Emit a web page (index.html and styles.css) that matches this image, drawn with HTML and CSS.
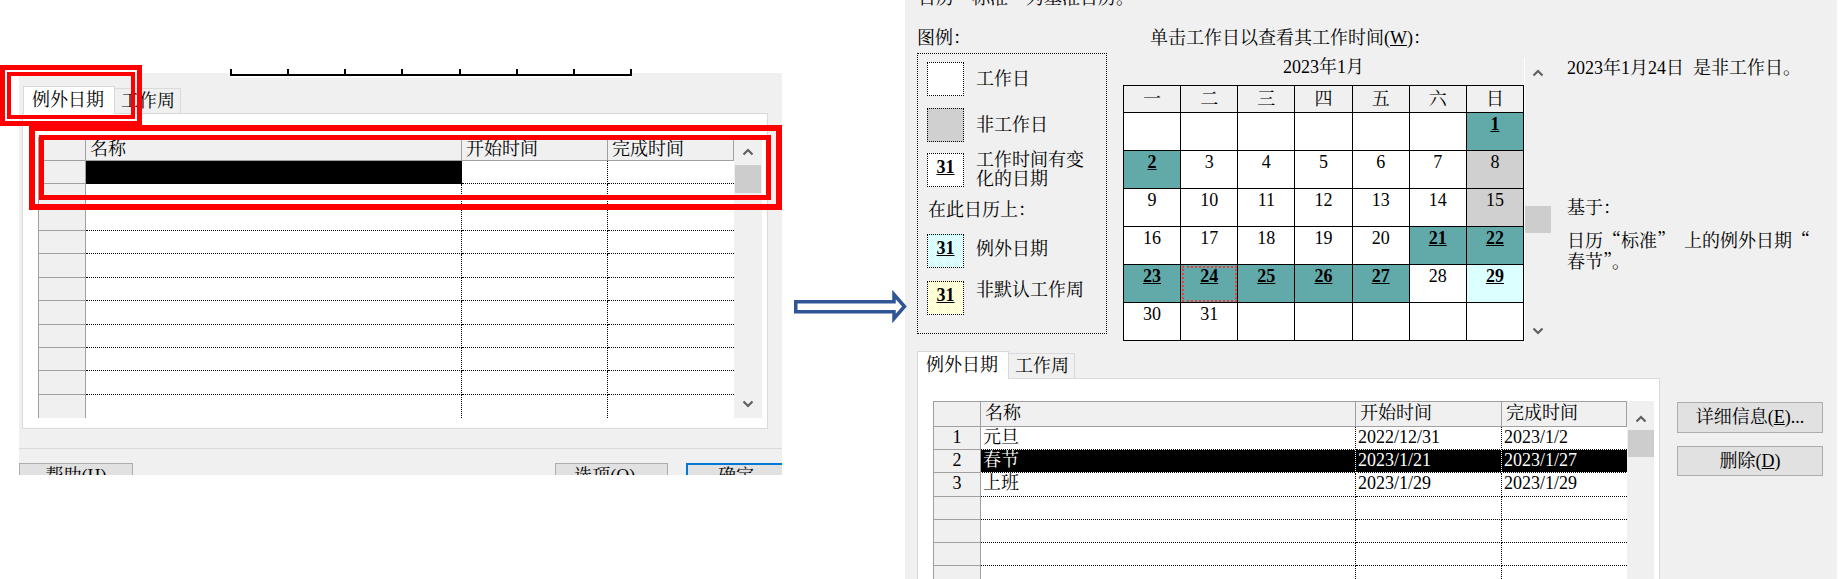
FILE: index.html
```html
<!DOCTYPE html>
<html lang="zh-CN">
<head>
<meta charset="utf-8">
<title>更改工作时间 - 例外日期</title>
<link rel="stylesheet" href="styles.css">
</head>
<body>
<div class="stage">
  <section class="shot-left">
    <div class="ruler"></div>
    <div class="dlg">
      <div class="tabs">
        <div class="tab active">例外日期</div>
        <div class="tab">工作周</div>
      </div>
      <div class="panel panel-l">
        <div class="tbl">
          <div class="grid grid-l">
            <div class="rh hd"></div><div class="hd">名称</div><div class="hd">开始时间</div><div class="hd">完成时间</div>
            <div class="rh"></div><div class="c blk"></div><div class="c"></div><div class="c l3"></div>
            <div class="rh"></div><div class="c"></div><div class="c"></div><div class="c l3"></div>
            <div class="rh"></div><div class="c"></div><div class="c"></div><div class="c l3"></div>
            <div class="rh"></div><div class="c"></div><div class="c"></div><div class="c l3"></div>
            <div class="rh"></div><div class="c"></div><div class="c"></div><div class="c l3"></div>
            <div class="rh"></div><div class="c"></div><div class="c"></div><div class="c l3"></div>
            <div class="rh"></div><div class="c"></div><div class="c"></div><div class="c l3"></div>
            <div class="rh"></div><div class="c"></div><div class="c"></div><div class="c l3"></div>
            <div class="rh"></div><div class="c"></div><div class="c"></div><div class="c l3"></div>
            <div class="rh"></div><div class="c"></div><div class="c"></div><div class="c l3"></div>
            <div class="rh end"></div><div class="c end"></div><div class="c end"></div><div class="c l3 end"></div>
          </div>
          <div class="vs vs-l">
            <svg class="chev up" viewBox="0 0 12 8"><path d="M1.5 6.5L6 2L10.5 6.5"/></svg>
            <div class="thumb"></div>
            <div class="grow"></div>
            <svg class="chev down" viewBox="0 0 12 8"><path d="M1.5 1.5L6 6L10.5 1.5"/></svg>
          </div>
        </div>
      </div>
      <div class="sep"></div>
      <div class="btns">
        <div class="btn b-help">帮助(<span class="u">H</span>)</div>
        <div class="btn b-opt">选项(<span class="u">O</span>)...</div>
        <div class="btn b-ok">确定</div>
      </div>
    </div>
    <div class="mark m1o"></div>
    <div class="mark m1i"></div>
    <div class="mark m2o"></div>
    <div class="mark m2i"></div>
  </section>

  <div class="arrow">
    <svg viewBox="0 0 113 30" width="113" height="30"><path d="M1.75 9.75H100V2.5L110.5 14.5L100 26.5V19.75H1.75Z"/></svg>
  </div>

  <section class="shot-right">
    <div class="rtop">日历<span class="q">“</span>标准<span class="q">”</span>为基准日历。</div>
    <div class="rmain">
      <div class="lg-col">
        <div class="cap">图例：</div>
        <div class="legend">
          <div class="li"><div class="sw"></div><div class="lbl">工作日</div></div>
          <div class="li li-2"><div class="sw gray"></div><div class="lbl">非工作日</div></div>
          <div class="li li-3"><div class="sw"><span class="u">31</span></div><div class="lbl two">工作时间有变化的日期</div></div>
          <div class="onthis">在此日历上：</div>
          <div class="li li-4"><div class="sw cyan"><span class="u">31</span></div><div class="lbl up2">例外日期</div></div>
          <div class="li li-5"><div class="sw yellow"><span class="u">31</span></div><div class="lbl top">非默认工作周</div></div>
        </div>
      </div>
      <div class="cal-col">
        <div class="cal-title">单击工作日以查看其工作时间(<span class="u">W</span>)：</div>
        <div class="cal-month">2023年1月</div>
        <table class="cal">
          <tr><th>一</th><th>二</th><th>三</th><th>四</th><th>五</th><th>六</th><th>日</th></tr>
          <tr><td></td><td></td><td></td><td></td><td></td><td></td><td class="ex">1</td></tr>
          <tr><td class="ex">2</td><td>3</td><td>4</td><td>5</td><td>6</td><td>7</td><td class="off">8</td></tr>
          <tr><td>9</td><td>10</td><td>11</td><td>12</td><td>13</td><td>14</td><td class="off">15</td></tr>
          <tr><td>16</td><td>17</td><td>18</td><td>19</td><td>20</td><td class="ex">21</td><td class="ex">22</td></tr>
          <tr><td class="ex">23</td><td class="ex cur">24</td><td class="ex">25</td><td class="ex">26</td><td class="ex">27</td><td>28</td><td class="cy">29</td></tr>
          <tr><td>30</td><td>31</td><td></td><td></td><td></td><td></td><td></td></tr>
        </table>
      </div>
      <div class="vs vs-cal">
        <svg class="chev up" viewBox="0 0 12 8"><path d="M1.5 6.5L6 2L10.5 6.5"/></svg>
        <div class="thumb"></div>
        <div class="grow"></div>
        <svg class="chev down" viewBox="0 0 12 8"><path d="M1.5 1.5L6 6L10.5 1.5"/></svg>
      </div>
      <div class="info">
        <div class="i1">2023年1月24日&ensp;是非工作日。</div>
        <div class="i2">基于：</div>
        <div class="i3">日历<span class="q">“</span>标准<span class="q">”</span>　上的例外日期<span class="q">“</span><br>春节<span class="q">”</span>。</div>
      </div>
    </div>
    <div class="rbottom">
      <div class="rtabwrap">
        <div class="tabs">
          <div class="tab active">例外日期</div>
          <div class="tab">工作周</div>
        </div>
        <div class="panel panel-r">
          <div class="tbl">
            <div class="grid grid-r">
              <div class="rh hd"></div><div class="hd">名称</div><div class="hd">开始时间</div><div class="hd">完成时间</div>
              <div class="rh">1</div><div class="c">元旦</div><div class="c">2022/12/31</div><div class="c l3">2023/1/2</div>
              <div class="rh">2</div><div class="c s">春节</div><div class="c s">2023/1/21</div><div class="c s l3">2023/1/27</div>
              <div class="rh">3</div><div class="c">上班</div><div class="c">2023/1/29</div><div class="c l3">2023/1/29</div>
              <div class="rh"></div><div class="c"></div><div class="c"></div><div class="c l3"></div>
              <div class="rh"></div><div class="c"></div><div class="c"></div><div class="c l3"></div>
              <div class="rh"></div><div class="c"></div><div class="c"></div><div class="c l3"></div>
              <div class="rh"></div><div class="c"></div><div class="c"></div><div class="c l3"></div>
              <div class="rh"></div><div class="c"></div><div class="c"></div><div class="c l3"></div>
            </div>
            <div class="vs vs-r">
              <svg class="chev up" viewBox="0 0 12 8"><path d="M1.5 6.5L6 2L10.5 6.5"/></svg>
              <div class="thumb"></div>
              <div class="grow"></div>
            </div>
          </div>
        </div>
      </div>
      <div class="rbtns">
        <div class="btn rbtn">详细信息(<span class="u">E</span>)...</div>
        <div class="btn rbtn rbtn2">删除(<span class="u">D</span>)</div>
      </div>
    </div>
  </section>
</div>
</body>
</html>
```

FILE: styles.css
```css
* { box-sizing: border-box; }
html, body { margin: 0; padding: 0; background: #fff; }
body {
  font-family: "Liberation Serif", "Noto Serif CJK SC", "Noto Sans CJK SC", serif;
  font-size: 18px;
  line-height: 20px;
  color: #000;
}
.q { font-family: "Noto Serif CJK SC", "Noto Sans CJK SC", sans-serif; }
.u { text-decoration: underline; }

.stage {
  display: flex;
  align-items: flex-start;
  width: 1838px;
  height: 579px;
  overflow: hidden;
}

/* ---------- left screenshot ---------- */
.shot-left {
  position: relative;
  width: 782px;
  flex-shrink: 0;
  padding-top: 69px;
}
.ruler {
  position: relative;
  z-index: 1;
  margin-left: 230px;
  width: 402px;
  height: 9px;
  background:
    linear-gradient(#000, #000) 0 5px / 100% 2px no-repeat,
    repeating-linear-gradient(to right, #000 0 2px, transparent 2px 57.14px) 0 0 / 100% 5px no-repeat,
    #fff;
}
.dlg {
  margin: -5px 0 0 19px;
  width: 763px;
  height: 402px;
  background: #f0f0f0;
  overflow: hidden;
}
.tabs {
  display: flex;
  align-items: flex-end;
  height: 27px;
}
.dlg .tabs { margin: 13px 0 0 4px; }
.tab {
  width: 66px;
  height: 25px;
  padding-left: 6px;
  border: 1px solid #d9d9d9;
  border-left: 0;
  border-bottom: 0;
  background: #f0f0f0;
  line-height: 24px;
  white-space: nowrap;
}
.tab.active {
  position: relative;
  z-index: 1;
  width: 92px;
  height: 28px;
  margin-bottom: -1px;
  padding-left: 8px;
  border-left: 1px solid #d9d9d9;
  background: #fff;
  line-height: 26px;
}
.panel {
  background: #fff;
  border: 1px solid #d9d9d9;
}
.panel-l {
  margin-left: 3px;
  width: 746px;
  height: 316px;
  padding: 23px 0 0 15px;
}
.tbl { display: flex; align-items: flex-start; }
.grid { display: grid; }
.grid-l {
  grid-template-columns: 48px 376px 146px 126px;
  grid-template-rows: 24px repeat(11, 23.36px);
}
.grid-r {
  grid-template-columns: 48px 375px 146px 125px;
  grid-template-rows: 26px repeat(8, 23.2px);
}
.hd {
  background: #f0f0f0;
  border-top: 1px solid #a0a0a0;
  border-bottom: 1px solid #a0a0a0;
  border-right: 1px solid #a0a0a0;
  padding-left: 4px;
  line-height: 22px;
  white-space: nowrap;
  overflow: hidden;
}
.grid-r .hd { line-height: 23px; }
.rh {
  background: #f0f0f0;
  border-left: 1px solid #a0a0a0;
  border-right: 1px solid #a0a0a0;
  border-bottom: 1px solid #a0a0a0;
  text-align: center;
  line-height: 21px;
}
.rh.end { border-bottom: 0; }
.c {
  border-right: 1px dotted #000;
  border-bottom: 1px dotted #000;
  padding-left: 2px;
  line-height: 21px;
  white-space: nowrap;
  overflow: hidden;
}
.c.l3 { border-right: 0; }
.c.end { border-bottom: 0; }
.c.blk { background: #000; }
.c.s {
  background: #000;
  color: #fff;
  border-right-color: #fff;
  border-bottom-color: #fff;
}
.c.s.l3 { border-right: 0; }

.vs {
  display: flex;
  flex-direction: column;
  align-items: center;
  background: #f0f0f0;
  flex-shrink: 0;
}
.chev {
  display: block;
  width: 12px;
  height: 8px;
  flex-shrink: 0;
  fill: none;
  stroke: #606060;
  stroke-width: 2.2;
}
.thumb {
  align-self: stretch;
  background: #cdcdcd;
  flex-shrink: 0;
}
.grow { flex: 1; }
.vs-l { width: 28px; height: 281px; }
.vs-l .up { margin-top: 11px; }
.vs-l .thumb { margin: 9px 1px 0; height: 28px; }
.vs-l .down { margin-bottom: 10px; }

.sep {
  margin-top: 19px;
  height: 1px;
  background: #dadada;
}
.btns { display: flex; margin-top: 14px; }
.btn {
  flex-shrink: 0;
  height: 26px;
  border: 1px solid #adadad;
  background: #e1e1e1;
  text-align: center;
  line-height: 24px;
  white-space: nowrap;
}
.b-help { width: 114px; }
.b-opt { margin-left: 422px; width: 113px; }
.b-ok { margin-left: 18px; width: 100px; border: 2px solid #0078d7; line-height: 22px; }

.mark {
  position: absolute;
  border: 5px solid #ff0000;
  pointer-events: none;
}
.m1o { left: 0; top: 65px; width: 142px; height: 61px; border-width: 5px; }
.m1i { left: 7px; top: 72px; width: 128px; height: 47px; border-width: 4px; }
.m2o { left: 29px; top: 125px; width: 753px; height: 85px; border-width: 6px; }
.m2i { left: 39px; top: 135px; width: 732px; height: 65px; border-width: 5px; }

/* ---------- arrow ---------- */
.arrow {
  position: relative;
  z-index: 2;
  width: 123px;
  flex-shrink: 0;
  margin-top: 292px;
}
.arrow svg {
  display: block;
  margin-left: 12px;
  overflow: visible;
}
.arrow path {
  fill: #fff;
  stroke: #2f5597;
  stroke-width: 3.5;
}

/* ---------- right screenshot ---------- */
.shot-right {
  width: 932px;
  height: 579px;
  flex-shrink: 0;
  background: #f0f0f0;
  overflow: hidden;
}
.rtop {
  margin-top: -14px;
  padding-left: 13px;
  height: 20px;
  white-space: nowrap;
}
.rmain {
  display: flex;
  align-items: flex-start;
  height: 345px;
}
.lg-col { margin-left: 12px; width: 190px; flex-shrink: 0; }
.cap { margin-top: 22px; height: 20px; }
.legend {
  margin-top: 5px;
  height: 281px;
  border: 1px dotted #000;
  padding: 8px 0 0 9px;
}
.li { display: flex; align-items: center; height: 34px; }
.li-2 { margin-top: 12px; }
.li-3 { margin-top: 11px; }
.li-4 { margin-top: 14px; }
.li-5 { margin-top: 13px; }
.onthis { margin-top: 13px; height: 20px; padding-left: 1px; }
.sw {
  flex-shrink: 0;
  width: 37px;
  height: 34px;
  border: 1px dotted #000;
  background: #fff;
  text-align: center;
  padding-top: 3px;
  line-height: 20px;
  font-weight: bold;
}
.sw.gray { background: #d0d0d0; }
.sw.cyan { background: repeating-conic-gradient(#b8ffff 0 25%, #fff 0 50%) 0 0 / 2px 2px; }
.sw.yellow { background: repeating-conic-gradient(#ffffb0 0 25%, #fff 0 50%) 0 0 / 2px 2px; }
.lbl { margin-left: 12px; white-space: nowrap; }
.lbl.two { width: 112px; line-height: 19px; white-space: normal; }
.lbl.up2 { margin-bottom: 5px; }
.lbl.top { align-self: flex-start; margin-top: -1px; }

.cal-col { margin-left: 16px; width: 401px; flex-shrink: 0; }
.cal-title { margin-top: 22px; padding-left: 27px; height: 20px; white-space: nowrap; }
.cal-month { margin-top: 9px; height: 20px; text-align: center; }
.cal {
  margin-top: 8px;
  width: 401px;
  border-collapse: collapse;
  table-layout: fixed;
  background: #fff;
}
.cal th {
  height: 27px;
  padding: 0;
  border: 1px solid #000;
  background: #f0f0f0;
  font-weight: normal;
  line-height: 20px;
}
.cal td {
  height: 38px;
  padding: 1px 0 0;
  border: 1px solid #000;
  vertical-align: top;
  text-align: center;
}
.cal td.ex {
  background: repeating-conic-gradient(#007a7a 0 25%, #c4dada 0 50%) 0 0 / 2px 2px;
  font-weight: bold;
  text-decoration: underline;
}
.cal td.cy {
  background: repeating-conic-gradient(#b8ffff 0 25%, #fff 0 50%) 0 0 / 2px 2px;
  font-weight: bold;
  text-decoration: underline;
}
.cal td.off { background: #d0d0d0; }
.cal td.cur { outline: 2px dotted #e04040; outline-offset: -3px; }

.vs-cal {
  width: 27px;
  height: 287px;
  margin-top: 52px;
  border-left: 1px solid #fff;
}
.vs-cal .up { margin-top: 11px; }
.vs-cal .thumb { margin-top: 129px; height: 27px; }
.vs-cal .down { margin-bottom: 10px; }

.info { margin-left: 16px; width: 265px; flex-shrink: 0; }
.i1 { margin-top: 52px; white-space: nowrap; }
.i2 { margin-top: 120px; }
.i3 { margin-top: 12px; line-height: 19px; }

.rbottom { display: flex; align-items: flex-start; }
.rtabwrap { margin-left: 12px; width: 743px; flex-shrink: 0; }
.panel-r {
  width: 743px;
  height: 240px;
  padding: 22px 0 0 15px;
}
.vs-r { width: 27px; height: 211px; }
.vs-r .up { margin-top: 14px; }
.vs-r .thumb { margin: 7px 0 0 1px; height: 27px; }
.rbtns { margin-left: 17px; margin-top: 51px; width: 146px; flex-shrink: 0; }
.rbtn { width: 146px; height: 31px; line-height: 29px; }
.rbtn2 { margin-top: 13px; height: 30px; line-height: 28px; }
```
